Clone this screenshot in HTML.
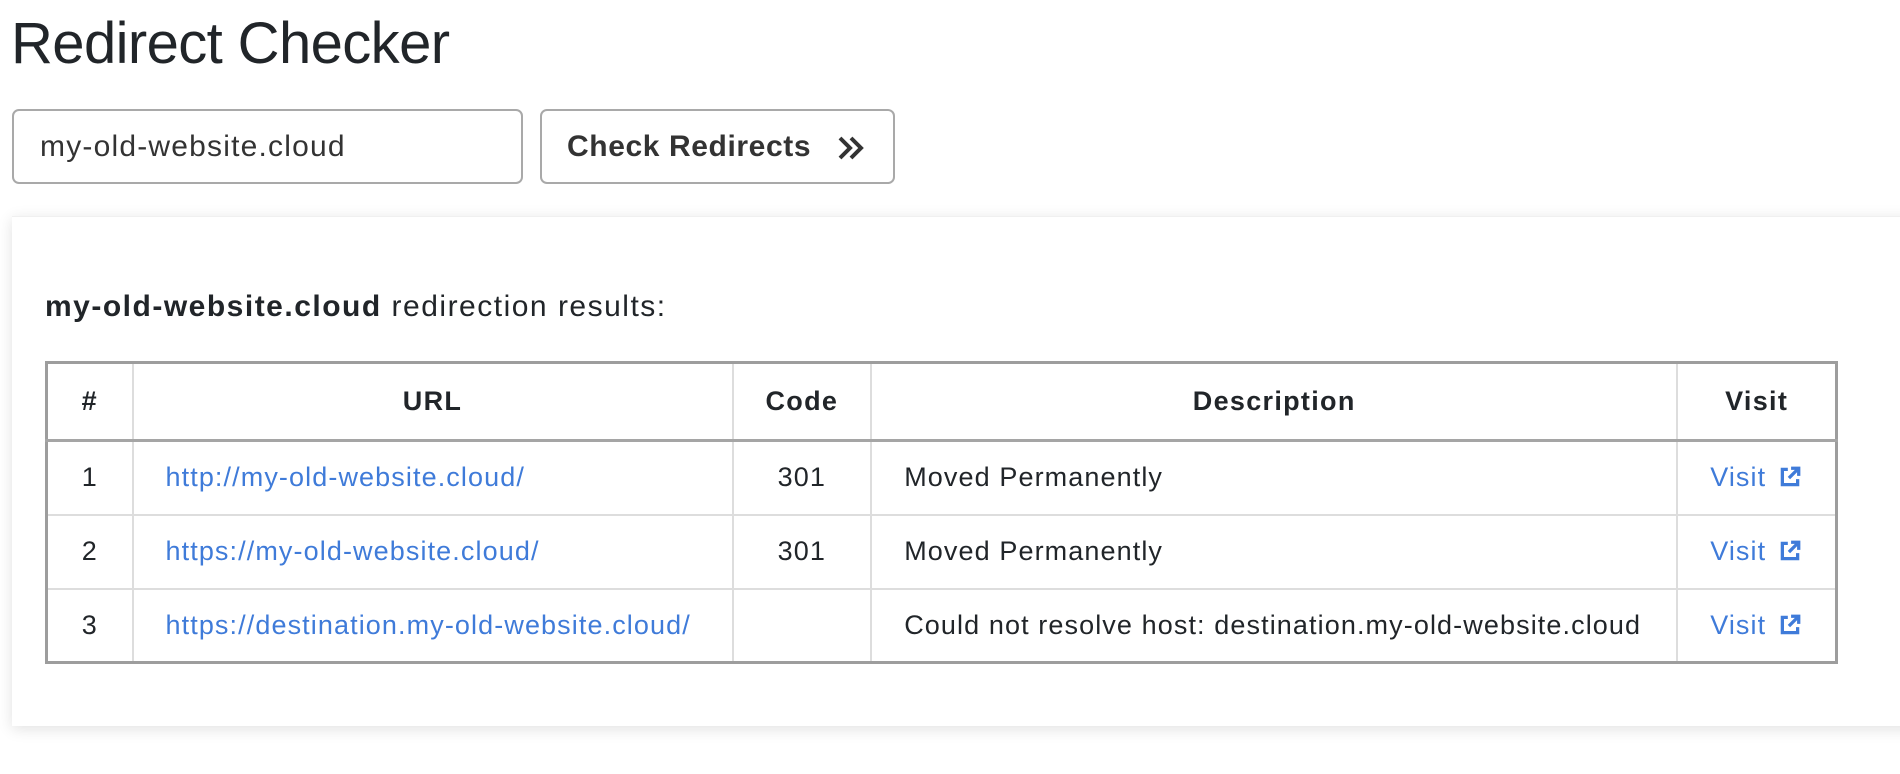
<!DOCTYPE html>
<html><head><meta charset="utf-8"><style>
*{box-sizing:border-box;margin:0;padding:0}
body{width:1900px;height:774px;background:#fff;font-family:"Liberation Sans",Arial,sans-serif;color:#212529;position:relative;overflow:hidden}
h1{position:absolute;left:11px;top:10px;font-size:58px;font-weight:400;letter-spacing:-0.6px;color:#212529}
.inp{position:absolute;left:12px;top:109px;width:511px;height:75px;border:2px solid #a9a9a9;border-radius:7px;font-size:30px;letter-spacing:1.2px;padding-left:26px;line-height:71px;color:#333}
.btn{position:absolute;left:540px;top:109px;width:355px;height:75px;border:2px solid #a9a9a9;border-radius:7px;font-size:30px;letter-spacing:0.6px;font-weight:700;padding-left:25px;line-height:71px;color:#333}
.btn svg{position:absolute;left:294px;top:24px}
.card{position:absolute;left:12px;top:216px;width:1950px;height:510px;background:#fff;box-shadow:0 3px 14px rgba(0,0,0,.12);border-top:1px solid #f0f0f0}
.res{position:absolute;left:45px;top:290px;font-size:30px;letter-spacing:1.5px}
table{position:absolute;left:45px;top:361px;width:1793px;border-collapse:collapse;border:3px solid #9d9d9d;font-size:27px;letter-spacing:1.1px}
td,th{border:2px solid #ddd;height:74px;padding:0 32px}
th{border-bottom:3px solid #a5a5a5;border-left:2px solid #bbb;height:78px;font-weight:700;letter-spacing:1.3px}
a{color:#3f7bd9;text-decoration:none}
.c{text-align:center}
svg.ext{vertical-align:-3px;margin-left:12px}
</style></head><body>
<h1>Redirect Checker</h1>
<div class="inp">my-old-website.cloud</div>
<div class="btn">Check Redirects<svg width="30" height="26" viewBox="0 0 30 26"><path d="M4 3l10 10-10 10M15 3l10 10-10 10" fill="none" stroke="#333" stroke-width="4"/></svg></div>
<div class="card"></div>
<div class="res"><b>my-old-website.cloud</b> redirection results:</div>
<table>
<tr><th style="width:86px">#</th><th style="width:600px">URL</th><th style="width:138px">Code</th><th style="width:806px">Description</th><th>Visit</th></tr>
<tr><td class="c" style="padding:0">1</td><td><a>http://my-old-website.cloud/</a></td><td class="c">301</td><td>Moved Permanently</td><td><a>Visit<svg class="ext" width="24" height="24" viewBox="0 0 22 22"><path d="M9 4H4v14h14v-5M12 3h7v7M19 3l-9 9" fill="none" stroke="#3f7bd9" stroke-width="3"/></svg></a></td></tr>
<tr><td class="c" style="padding:0">2</td><td><a>https://my-old-website.cloud/</a></td><td class="c">301</td><td>Moved Permanently</td><td><a>Visit<svg class="ext" width="24" height="24" viewBox="0 0 22 22"><path d="M9 4H4v14h14v-5M12 3h7v7M19 3l-9 9" fill="none" stroke="#3f7bd9" stroke-width="3"/></svg></a></td></tr>
<tr><td class="c" style="padding:0">3</td><td><a>https://destination.my-old-website.cloud/</a></td><td class="c"></td><td>Could not resolve host: destination.my-old-website.cloud</td><td><a>Visit<svg class="ext" width="24" height="24" viewBox="0 0 22 22"><path d="M9 4H4v14h14v-5M12 3h7v7M19 3l-9 9" fill="none" stroke="#3f7bd9" stroke-width="3"/></svg></a></td></tr>
</table>
</body></html>
